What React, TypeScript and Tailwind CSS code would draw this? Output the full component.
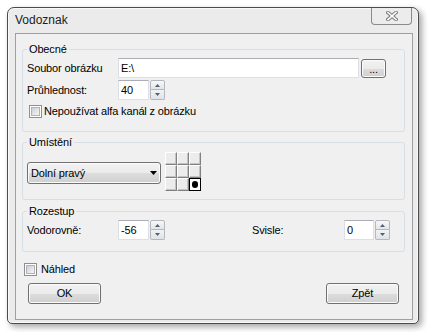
import React from "react";

const btn =
  "flex items-center justify-center rounded-[3px] border border-[#707070] bg-[linear-gradient(#f2f2f2_0%,#ebebeb_50%,#dddddd_51%,#cfcfcf_100%)] shadow-[inset_0_0_0_1px_#fbfbfb]";

function TextBox({ w, children }: { w: string; children: React.ReactNode }) {
  return (
    <div
      className={
        "flex h-[20px] items-center border border-[#dbdfe6] border-t-[#abadb3] bg-white pl-[2px] " + w
      }
    >
      {children}
    </div>
  );
}

function Spinner() {
  return (
    <div className="ml-[1px] flex h-[20px] w-[15px] flex-col">
      <div className="flex h-[10px] items-center justify-center rounded-t-[2px] border border-[#b3b8bf] bg-[linear-gradient(#f8f8f8,#e4e4e4)]">
        <svg width="5" height="3" viewBox="0 0 5 3">
          <polygon points="0,3 5,3 2.5,0" fill="#4d6079" />
        </svg>
      </div>
      <div className="flex h-[10px] items-center justify-center rounded-b-[2px] border border-t-0 border-[#b3b8bf] bg-[linear-gradient(#f2f2f2,#dfe3e8)]">
        <svg width="5" height="3" viewBox="0 0 5 3">
          <polygon points="0,0 5,0 2.5,3" fill="#4d6079" />
        </svg>
      </div>
    </div>
  );
}

function CheckBox() {
  return (
    <div className="h-[13px] w-[13px] border border-[#8e8f8f] bg-white p-[1px]">
      <div className="h-full w-full border border-[#aeb3b9] bg-[linear-gradient(135deg,#cbcfd5,#f6f6f6)]" />
    </div>
  );
}

function Cell({ selected }: { selected?: boolean }) {
  if (selected) {
    return (
      <div className="flex h-[13px] w-[12px] items-center justify-center border border-black bg-white">
        <div className="h-[7px] w-[6px] rounded-full bg-black" />
      </div>
    );
  }
  return (
    <div className="h-[13px] w-[12px] border border-t-white border-l-white border-r-[#808080] border-b-[#808080] bg-[#ececec] shadow-[inset_-1px_-1px_0_#c4c4c4]" />
  );
}

export default function App() {
  return (
    <div className="h-[332px] w-[428px] overflow-hidden bg-white pl-[7px] pt-[7px] font-['Liberation_Sans',Arial,sans-serif] text-[11px] tracking-[-0.15px] text-black">
      <div className="flex h-[317px] w-[412px] flex-col rounded-t-[7px] rounded-b-[5px] border border-[#4b4b4b] bg-[#ebebeb] shadow-[inset_0_0_0_1px_#f9f9f9,3px_3px_6px_rgba(0,0,0,0.35)]">
        <div className="flex h-[25px] items-start justify-between">
          <span className="ml-[7px] mt-[5px] text-[12px] leading-[15px] tracking-normal text-[#1c1c1c]">Vodoznak</span>
          <div className="mr-[6px] flex h-[17px] w-[41px] items-center justify-center rounded-b-[4px] border border-t-0 border-[#8a8a8a] bg-[#ececec]">
            <svg width="12" height="10" viewBox="0 0 12 10">
              <path d="M2 1.5 L10 8.5 M10 1.5 L2 8.5" stroke="#7a7a7a" strokeWidth="3.6" strokeLinecap="square" />
              <path d="M2 1.5 L10 8.5 M10 1.5 L2 8.5" stroke="#ffffff" strokeWidth="1.6" strokeLinecap="square" />
            </svg>
          </div>
        </div>
        <div className="mb-[3px] ml-[7px] mr-[5px] flex flex-1 flex-col border border-[#a0a0a0] bg-[#f0f0f0]">
          <fieldset className="ml-[6px] mr-[7px] mt-[9px] h-[89px] min-w-0 rounded-[3px] border border-[#d5dfe5] px-[4px]">
            <legend className="px-[2px] leading-[13px]">Obecné</legend>
            <div className="mt-[2px] flex h-[20px] items-center">
              <span className="w-[91px]">Soubor obrázku</span>
              <TextBox w="w-[241px]">E:\</TextBox>
              <div className={btn + " ml-[2px] h-[19px] w-[25px] pt-[3px] leading-none"}>...</div>
            </div>
            <div className="mt-[2px] flex h-[20px] items-center">
              <span className="w-[91px]">Průhlednost:</span>
              <TextBox w="w-[31px]">40</TextBox>
              <Spinner />
            </div>
            <div className="mt-[5px] flex h-[13px] items-center">
              <div className="ml-[2px]">
                <CheckBox />
              </div>
              <span className="ml-[2px]">Nepoužívat alfa kanál z obrázku</span>
            </div>
          </fieldset>

          <fieldset className="ml-[6px] mr-[7px] mt-[4px] h-[64px] min-w-0 rounded-[3px] border border-[#d5dfe5] px-[4px]">
            <legend className="px-[2px] leading-[13px]">Umístění</legend>
            <div className="mt-[3px] flex items-start">
              <div className={btn + " mt-[10px] h-[22px] w-[134px] !justify-between pl-[3px] pr-[3px]"}>
                <span>Dolní pravý</span>
                <svg width="7" height="4" viewBox="0 0 7 4">
                  <polygon points="0,0 7,0 3.5,4" fill="#000" />
                </svg>
              </div>
              <div className="ml-[4px] grid grid-cols-[repeat(3,12px)] grid-rows-[repeat(3,13px)]">
                <Cell />
                <Cell />
                <Cell />
                <Cell />
                <Cell />
                <Cell />
                <Cell />
                <Cell />
                <Cell selected />
              </div>
            </div>
          </fieldset>

          <fieldset className="ml-[6px] mr-[7px] mt-[5px] h-[47px] min-w-0 rounded-[3px] border border-[#d5dfe5] px-[4px]">
            <legend className="px-[2px] leading-[13px]">Rozestup</legend>
            <div className="mt-[2px] flex h-[20px] items-center">
              <span className="w-[91px]">Vodorovně:</span>
              <TextBox w="w-[31px]">-56</TextBox>
              <Spinner />
              <span className="ml-[87px] w-[92px]">Svisle:</span>
              <TextBox w="w-[30px]">0</TextBox>
              <Spinner />
            </div>
          </fieldset>

          <div className="ml-[8px] mt-[11px] flex h-[13px] items-center">
            <CheckBox />
            <span className="ml-[4px]">Náhled</span>
          </div>

          <div className="mt-[7px] flex justify-between pl-[12px] pr-[13px]">
            <div className={btn + " h-[21px] w-[73px]"}>OK</div>
            <div className={btn + " h-[21px] w-[73px]"}>Zpět</div>
          </div>
        </div>
      </div>
    </div>
  );
}
